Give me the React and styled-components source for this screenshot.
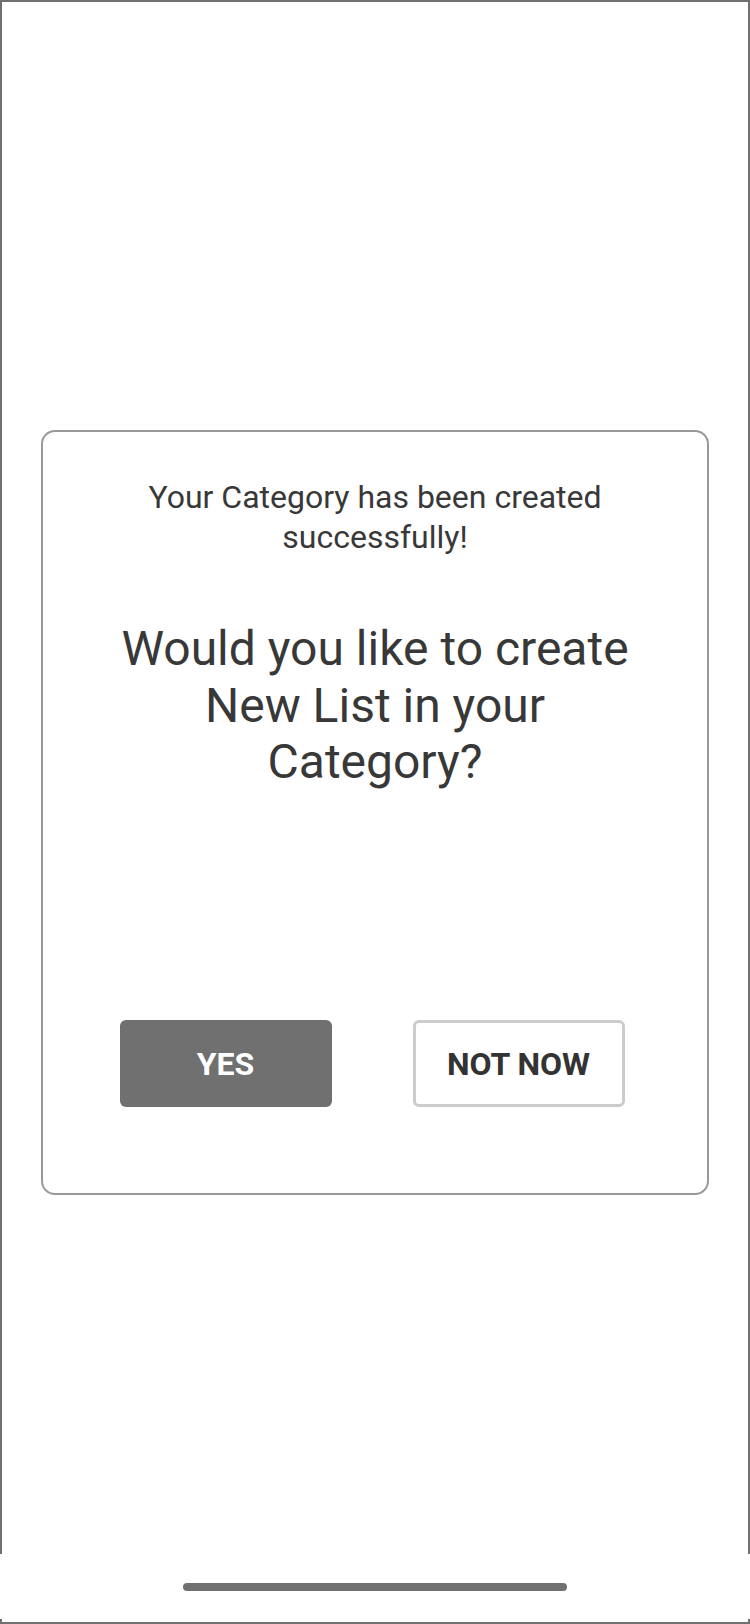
import React from 'react'
import styled, { createGlobalStyle } from 'styled-components'

const GlobalStyle = createGlobalStyle`
  * {
    box-sizing: border-box;
  }
  body {
    margin: 0;
    background: #ffffff;
    font-family: Roboto, 'Liberation Sans', sans-serif;
  }
`

const Page = styled.div`
  width: 750px;
  height: 1624px;
  display: flex;
  flex-direction: column;
  background: #ffffff;
`

const Screen = styled.div`
  height: 1554px;
  border: 2px solid #707070;
  border-bottom: none;
  padding-top: 428px;
  display: flex;
  flex-direction: column;
  align-items: center;
`

const Card = styled.div`
  width: 668px;
  height: 765px;
  border: 2px solid #999999;
  border-radius: 14px;
  display: flex;
  flex-direction: column;
  align-items: center;
  padding-top: 45px;
`

const Message = styled.p`
  margin: 0;
  width: 540px;
  font-size: 32px;
  line-height: 40px;
  color: #383838;
  text-align: center;
`

const Question = styled.h2`
  margin: 64px 0 0;
  width: 540px;
  font-size: 48px;
  font-weight: 400;
  line-height: 56.5px;
  color: #383838;
  text-align: center;
`

const Actions = styled.div`
  margin-top: auto;
  margin-bottom: 86px;
  display: flex;
  gap: 81px;
  padding-right: 6px;
`

const Button = styled.button`
  width: 212px;
  height: 87px;
  border-radius: 6px;
  font-family: Roboto, 'Liberation Sans', sans-serif;
  font-size: 32px;
  font-weight: 700;
  cursor: pointer;
  background: ${(p) => (p.primary ? '#707070' : '#ffffff')};
  color: ${(p) => (p.primary ? '#ffffff' : '#333333')};
  border: ${(p) => (p.primary ? 'none' : '3px solid #cccccc')};
`

const Footer = styled.div`
  flex: 1;
  display: flex;
  flex-direction: column;
  align-items: center;
`

const HomeIndicator = styled.div`
  margin-top: 29px;
  width: 384px;
  height: 8px;
  border-radius: 4px;
  background: #707070;
`

const BottomEdge = styled.div`
  margin-top: auto;
  align-self: stretch;
  height: 5px;
  border: 2px solid #707070;
  border-top: none;
`

export default function App() {
  return (
    <>
      <GlobalStyle />
      <Page>
        <Screen>
          <Card>
            <Message>Your Category has been created successfully!</Message>
            <Question>Would you like to create New List in your Category?</Question>
            <Actions>
              <Button primary>YES</Button>
              <Button>NOT NOW</Button>
            </Actions>
          </Card>
        </Screen>
        <Footer>
          <HomeIndicator />
          <BottomEdge />
        </Footer>
      </Page>
    </>
  )
}
